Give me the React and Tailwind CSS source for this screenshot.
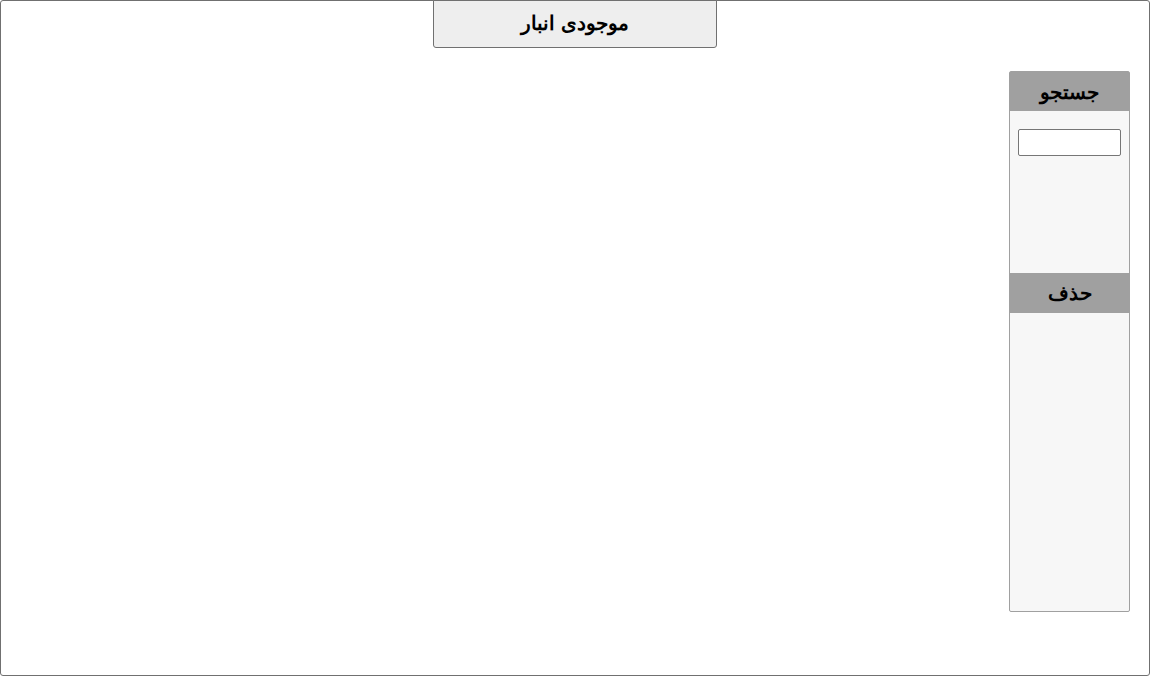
export default function App() {
  return (
    <div
      dir="rtl"
      className="w-[1150px] h-[676px] border border-[#707070] rounded-[3px] bg-white flex flex-col"
      style={{ fontFamily: '"Noto Sans", sans-serif' }}
    >
      {/* ── Title ── */}
      <div className="flex justify-center">
        <div className="w-[284px] h-[48px] -mt-px bg-[#eeeeee] border border-[#707070] rounded-b-[3px] flex items-center justify-center pb-[2px] text-[20px] font-semibold text-black">
          موجودی انبار
        </div>
      </div>

      {/* ── Side panel ── */}
      <div className="flex mt-[23px] pr-[19px]">
        <div className="w-[121px] h-[541px] bg-[#f7f7f7] border border-[#a0a0a0] rounded-[2px] flex flex-col">
          <div className="h-[39px] bg-[#a0a0a0] flex items-center justify-center text-[20px] font-bold text-black">
            جستجو
          </div>
          <div className="h-[162px] flex justify-center pt-[18px]">
            <input
              type="text"
              className="w-[103px] h-[27px] bg-white border border-[#767676] rounded-[2px]"
            />
          </div>
          <div className="h-[40px] bg-[#a0a0a0] flex items-center justify-center text-[20px] font-bold text-black">
            حذف
          </div>
        </div>
      </div>
    </div>
  )
}
